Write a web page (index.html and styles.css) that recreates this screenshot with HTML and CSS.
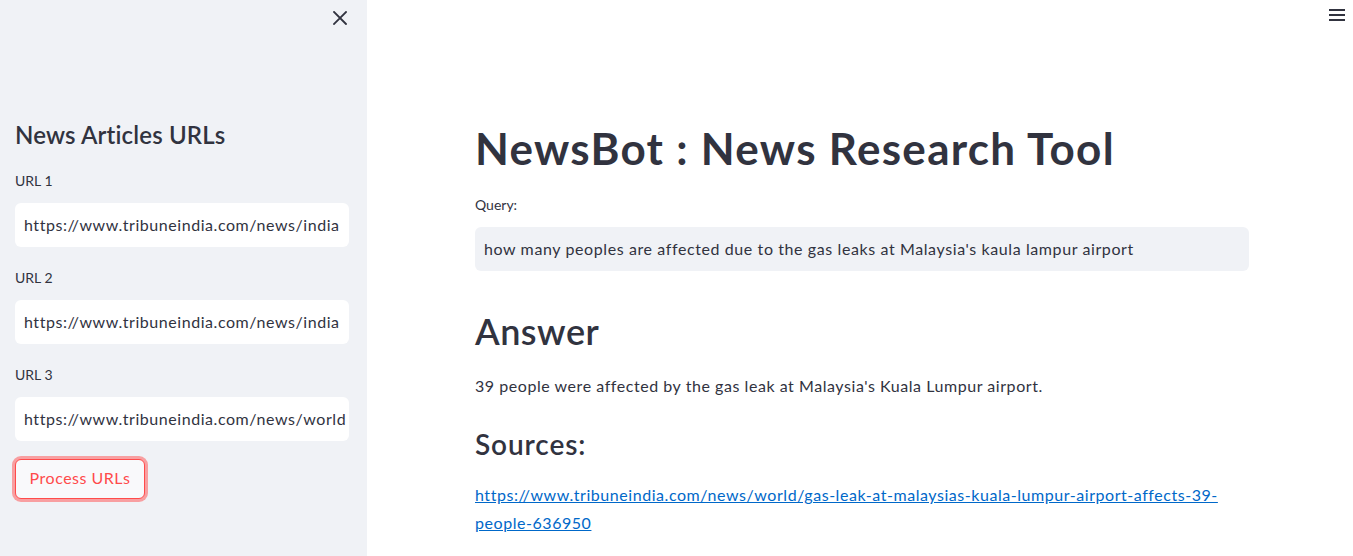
FILE: index.html
```html
<!DOCTYPE html>
<html lang="en">
<head>
<meta charset="utf-8">
<title>NewsBot</title>
<link rel="stylesheet" href="styles.css">
</head>
<body>
<div class="app">
  <aside class="sidebar">
    <div class="sidebar-top">
      <button class="close-btn" aria-label="Close sidebar">
        <svg width="14" height="14" viewBox="0 0 14 14"><path d="M1 1L13 13M13 1L1 13" stroke="#31333f" stroke-width="1.8" stroke-linecap="square"/></svg>
      </button>
    </div>
    <h2 class="side-title">News Articles URLs</h2>
    <div class="field">
      <label class="field-label">URL 1</label>
      <div class="text-input">https://www.tribuneindia.com/news/india</div>
    </div>
    <div class="field">
      <label class="field-label">URL 2</label>
      <div class="text-input">https://www.tribuneindia.com/news/india</div>
    </div>
    <div class="field">
      <label class="field-label">URL 3</label>
      <div class="text-input">https://www.tribuneindia.com/news/world</div>
    </div>
    <button class="process-btn">Process URLs</button>
  </aside>
  <main class="main">
    <button class="menu-btn" aria-label="Menu">
      <svg width="18" height="14" viewBox="0 0 18 14"><path d="M1 2H17M1 7H17M1 12H17" stroke="#31333f" stroke-width="2"/></svg>
    </button>
    <div class="content">
      <h1 class="title">NewsBot : News Research Tool</h1>
      <div class="query-label">Query:</div>
      <div class="query-box">how many peoples are affected due to the gas leaks at Malaysia's kaula lampur airport</div>
      <h2 class="answer-title">Answer</h2>
      <p class="answer-text">39 people were affected by the gas leak at Malaysia's Kuala Lumpur airport.</p>
      <h3 class="sources-title">Sources:</h3>
      <p class="sources"><a href="#">https://www.tribuneindia.com/news/world/gas-leak-at-malaysias-kuala-lumpur-airport-affects-39-people-636950</a></p>
    </div>
  </main>
</div>
</body>
</html>
```
FILE: styles.css
```css
* { box-sizing: border-box; }
html, body { margin: 0; padding: 0; }
body {
  font-family: Lato, "Noto Sans", "Liberation Sans", sans-serif;
  color: #31333f;
  background: #ffffff;
  width: 1353px;
  height: 556px;
  overflow: hidden;
}
.app {
  display: flex;
  height: 556px;
}
.sidebar {
  width: 367px;
  flex: none;
  background: #f0f2f6;
  padding: 0 18px 0 15px;
  display: flex;
  flex-direction: column;
  align-items: flex-start;
}
.sidebar-top {
  align-self: stretch;
  display: flex;
  justify-content: flex-end;
  padding-top: 11px;
  height: 120px;
}
.close-btn {
  border: none;
  background: transparent;
  padding: 0;
  margin-right: 2px;
  width: 14px;
  height: 14px;
  display: flex;
}
.side-title {
  margin: 0;
  font-size: 24px;
  font-weight: 600;
  line-height: 30px;
  letter-spacing: 0.15px;
}
.field {
  align-self: stretch;
  display: flex;
  flex-direction: column;
  margin-top: 21px;
}
.field-label {
  font-size: 14px;
  line-height: 20px;
  height: 20px;
}
.text-input {
  margin-top: 12px;
  height: 44px;
  background: #ffffff;
  border-radius: 6px;
  padding: 0 10px 0 9px;
  font-size: 16px;
  line-height: 44px;
  letter-spacing: 0.55px;
  white-space: nowrap;
  overflow: hidden;
  color: #31333f;
}
.process-btn {
  margin-top: 18px;
  width: 130px;
  height: 40px;
  border: 1px solid #ff4b4b;
  border-radius: 6px;
  background: #f9f9fb;
  color: #ff4b4b;
  font-family: inherit;
  font-size: 16px;
  letter-spacing: 0.5px;
  box-shadow: 0 0 0 3px rgba(255, 75, 75, 0.5);
  padding: 0 0 3px;
}
.main {
  flex: 1;
  position: relative;
  padding: 0 104px 0 108px;
}
.menu-btn {
  position: absolute;
  top: 8px;
  right: 7px;
  border: none;
  background: transparent;
  padding: 0;
  display: flex;
}
.content {
  padding-top: 121px;
}
.title {
  margin: 0;
  font-size: 44px;
  font-weight: 700;
  line-height: 54px;
  letter-spacing: 1.3px;
}
.query-label {
  margin-top: 20px;
  font-size: 14px;
  line-height: 20px;
}
.query-box {
  margin-top: 12px;
  height: 44px;
  background: #f0f2f6;
  border-radius: 6px;
  padding: 0 9px;
  font-size: 16px;
  line-height: 44px;
  letter-spacing: 0.6px;
}
.answer-title {
  margin: 38px 0 0;
  font-size: 36px;
  font-weight: 600;
  line-height: 44px;
  letter-spacing: 0.5px;
}
.answer-text {
  margin: 21px 0 0;
  font-size: 16px;
  line-height: 24px;
  letter-spacing: 0.55px;
}
.sources-title {
  margin: 29px 0 0;
  font-size: 28px;
  font-weight: 600;
  line-height: 34px;
  letter-spacing: 0.9px;
}
.sources {
  margin: 20px 0 0;
  font-size: 16px;
  line-height: 28px;
  letter-spacing: 0.55px;
}
.sources a {
  color: #0068c9;
  text-decoration: underline;
}
```
